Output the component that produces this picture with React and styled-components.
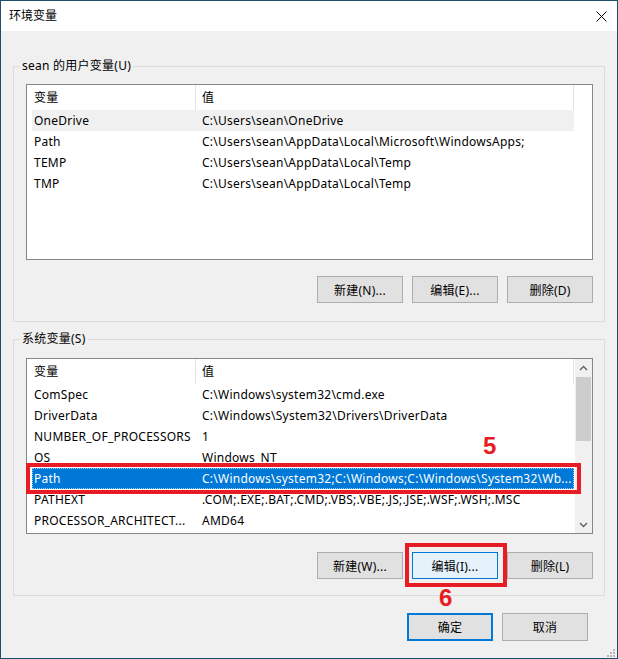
import React from 'react';
import styled, { createGlobalStyle } from 'styled-components';

const GlobalStyle = createGlobalStyle`
  html, body {
    margin: 0;
    padding: 0;
    background: #f0f0f0;
  }
  body {
    font-family: "Noto Sans", "Noto Sans CJK SC", sans-serif;
    font-size: 12px;
    letter-spacing: 0.25px;
    color: #000;
  }
  * { box-sizing: border-box; }
`;

const Window = styled.div`
  position: relative;
  width: 618px;
  height: 659px;
  border: 1px solid #1e4f6c;
  background: #f0f0f0;
  display: flex;
  flex-direction: column;
`;

const TitleBar = styled.div`
  flex: none;
  height: 30px;
  padding: 0 10px 0 8px;
  background: #fff;
  display: flex;
  align-items: center;
  justify-content: space-between;
  line-height: 16px;
  letter-spacing: 0;
`;

const Body = styled.div`
  display: flex;
  flex-direction: column;
  padding: 35px 12px 0;
`;

const GroupBox = styled.section`
  display: flex;
  flex-direction: column;
  margin-top: ${p => p.$top || 0}px;
  padding: 0 11px ${p => p.$bottom}px 12px;
  border: 1px solid #dcdcdc;
`;

const Legend = styled.div`
  align-self: flex-start;
  margin: -9px 0 0 -6px;
  padding: 0 2px;
  background: #f0f0f0;
  line-height: 16px;
  white-space: nowrap;
`;

const ListView = styled.div`
  position: relative;
  height: 176px;
  margin-top: ${p => p.$gap}px;
  border: 1px solid #828790;
  background: #fff;
  display: flex;
  justify-content: space-between;
`;

const Table = styled.div`
  width: 547px;
  padding-left: 5px;
`;

const HeaderRow = styled.div`
  display: grid;
  grid-template-columns: 164px 1fr;
  height: 25px;
`;

const HeaderCell = styled.div`
  padding-left: ${p => p.$pad}px;
  line-height: 25px;
  border-right: 1px solid #e5e5e5;
`;

const Row = styled.div`
  position: relative;
  display: grid;
  grid-template-columns: 164px 1fr;
  height: 21px;
  line-height: 21px;
  background: ${p => (p.$state === 'focus' ? '#0078d7' : p.$state === 'idle' ? '#f0f0f0' : 'transparent')};
  color: ${p => (p.$state === 'focus' ? '#fff' : '#000')};
  outline: ${p => (p.$state === 'focus' ? '1px dotted #9ccbf2' : 'none')};
  outline-offset: -1px;
`;

const Cell = styled.div`
  padding-left: ${p => p.$pad}px;
  white-space: nowrap;
  overflow: hidden;
`;

const ScrollBar = styled.div`
  width: 17px;
  background: #f0f0f0;
  display: flex;
  flex-direction: column;
`;

const ScrollArrow = styled.div`
  height: 17px;
  display: flex;
  align-items: center;
  justify-content: center;
  margin-top: ${p => (p.$down ? 'auto' : '0')};
`;

const Thumb = styled.div`
  height: 64px;
  margin: 1px 1px 0 1px;
  background: #cdcdcd;
`;

const ButtonRow = styled.div`
  display: flex;
  justify-content: flex-end;
  gap: 9px;
  margin-top: ${p => p.$gap}px;
`;

const Footer = styled(ButtonRow)`
  padding-right: 29px;
`;

const Button = styled.button`
  width: 86px;
  height: ${p => (p.$tall ? 28 : 27)}px;
  padding: 0;
  font: inherit;
  letter-spacing: inherit;
  color: #000;
  background: ${p => (p.$hover ? '#e5f1fb' : '#e1e1e1')};
  border: ${p => (p.$primary ? 2 : 1)}px solid ${p => (p.$hover || p.$primary ? '#0078d7' : '#adadad')};
`;

const Marked = styled.span`
  position: relative;
  display: flex;
`;

const RedFrame = styled.span`
  position: absolute;
  left: ${p => p.$x}px;
  top: ${p => p.$y}px;
  width: ${p => p.$w}px;
  height: ${p => p.$h}px;
  border: 4px solid #e81c24;
  pointer-events: none;
`;

const StepNumber = styled.span`
  position: absolute;
  left: ${p => p.$x}px;
  top: ${p => p.$y}px;
  font-family: "Liberation Sans", Arial, sans-serif;
  font-weight: bold;
  font-size: 24px;
  line-height: 24px;
  letter-spacing: 0;
  color: #e81c24;
`;

const Grip = styled.svg`
  position: absolute;
  left: 605px;
  top: 647px;
`;

const userVars = [
  ['OneDrive', 'C:\\Users\\sean\\OneDrive', 'idle'],
  ['Path', 'C:\\Users\\sean\\AppData\\Local\\Microsoft\\WindowsApps;'],
  ['TEMP', 'C:\\Users\\sean\\AppData\\Local\\Temp'],
  ['TMP', 'C:\\Users\\sean\\AppData\\Local\\Temp'],
];

const systemVars = [
  ['ComSpec', 'C:\\Windows\\system32\\cmd.exe'],
  ['DriverData', 'C:\\Windows\\System32\\Drivers\\DriverData'],
  ['NUMBER_OF_PROCESSORS', '1'],
  ['OS', 'Windows_NT'],
  ['Path', 'C:\\Windows\\system32;C:\\Windows;C:\\Windows\\System32\\Wb...', 'focus', true],
  ['PATHEXT', '.COM;.EXE;.BAT;.CMD;.VBS;.VBE;.JS;.JSE;.WSF;.WSH;.MSC'],
  ['PROCESSOR_ARCHITECT...', 'AMD64'],
];

const Chevron = ({ down }) => (
  <svg width="9" height="6" viewBox="0 0 9 6">
    <polyline
      points={down ? '1,1 4.5,4.5 8,1' : '1,5 4.5,1.5 8,5'}
      fill="none"
      stroke="#606060"
      strokeWidth="1.4"
    />
  </svg>
);

const VarList = ({ rows, gap, scroll }) => (
  <ListView $gap={gap}>
    <Table>
      <HeaderRow>
        <HeaderCell $pad={2}>变量</HeaderCell>
        <HeaderCell $pad={6}>值</HeaderCell>
      </HeaderRow>
      {rows.map(([name, value, state, marked]) => (
        <Row key={name + value} $state={state}>
          <Cell $pad={2}>{name}</Cell>
          <Cell $pad={6}>{value}</Cell>
          {marked && (
            <RedFrame $x={-6} $y={-5} $w={555} $h={31}>
              <StepNumber $x={453} $y={-33}>5</StepNumber>
            </RedFrame>
          )}
        </Row>
      ))}
    </Table>
    {scroll && (
      <ScrollBar>
        <ScrollArrow><Chevron /></ScrollArrow>
        <Thumb />
        <ScrollArrow $down><Chevron down /></ScrollArrow>
      </ScrollBar>
    )}
  </ListView>
);

export default function App() {
  return (
    <>
      <GlobalStyle />
      <Window>
        <TitleBar>
          <span>环境变量</span>
          <svg width="11" height="11" viewBox="0 0 11 11">
            <path d="M0.5 0.5 L10.5 10.5 M10.5 0.5 L0.5 10.5" stroke="#000" strokeWidth="1" />
          </svg>
        </TitleBar>

        <Body>
          <GroupBox $bottom={18}>
            <Legend>sean 的用户变量(U)</Legend>
            <VarList rows={userVars} gap={10} />
            <ButtonRow $gap={16}>
              <Button>新建(N)...</Button>
              <Button>编辑(E)...</Button>
              <Button>删除(D)</Button>
            </ButtonRow>
          </GroupBox>

          <GroupBox $top={17} $bottom={16}>
            <Legend>系统变量(S)</Legend>
            <VarList rows={systemVars} gap={11} scroll />
            <ButtonRow $gap={18}>
              <Button>新建(W)...</Button>
              <Marked>
                <Button $hover>编辑(I)...</Button>
                <RedFrame $x={-7} $y={-9} $w={102} $h={44}>
                  <StepNumber $x={30} $y={39}>6</StepNumber>
                </RedFrame>
              </Marked>
              <Button>删除(L)</Button>
            </ButtonRow>
          </GroupBox>
        </Body>

        <Footer $gap={17}>
          <Button $tall $primary>确定</Button>
          <Button $tall>取消</Button>
        </Footer>

        <Grip width="9" height="9" viewBox="0 0 9 9">
          <g fill="#b8b8b8">
            <rect x="7" y="1" width="2" height="2" />
            <rect x="4" y="4" width="2" height="2" />
            <rect x="7" y="4" width="2" height="2" />
            <rect x="1" y="7" width="2" height="2" />
            <rect x="4" y="7" width="2" height="2" />
            <rect x="7" y="7" width="2" height="2" />
          </g>
        </Grip>
      </Window>
    </>
  );
}
